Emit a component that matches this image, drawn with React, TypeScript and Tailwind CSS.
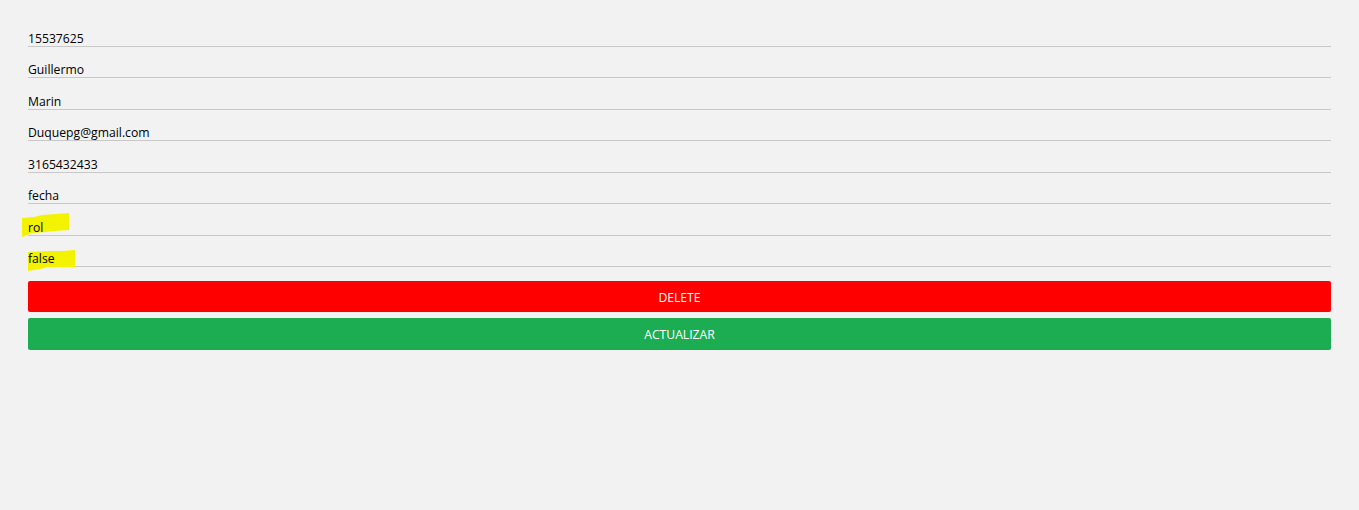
const fields = [
  "15537625",
  "Guillermo",
  "Marin",
  "Duquepg@gmail.com",
  "3165432433",
  "fecha",
  "rol",
  "false",
];

const Highlight = ({ kind }: { kind: "rol" | "false" }) =>
  kind === "rol" ? (
    <svg
      className="pointer-events-none absolute left-[-6px] top-[9px] h-[24px] w-[47px]"
      viewBox="0 0 47 24"
    >
      <polygon
        points="0,5 12,4 20,2 34,1 47,0 47,17 32,18 24,19 10,20 0,24"
        fill="#f3f300"
      />
    </svg>
  ) : (
    <svg
      className="pointer-events-none absolute left-0 top-[14.5px] h-[21px] w-[47px]"
      viewBox="0 0 47 21"
    >
      <polygon
        points="0,2 20,1 34,1 47,0 47,17 30,17 20,17 12,19 0,21"
        fill="#f3f300"
      />
    </svg>
  );

export default function App() {
  return (
    <div
      className="min-h-[510px] w-full bg-[#f2f2f2] px-[28px] pt-[15.6px] text-[12.2px] text-black"
      style={{ fontFamily: '"Open Sans", "Noto Sans", sans-serif' }}
    >
      <form className="flex flex-col">
        {fields.map((value) => (
          <div
            key={value}
            className="relative flex h-[31.43px] items-end border-b border-[#c8c8c8] pb-[1px]"
          >
            {(value === "rol" || value === "false") && (
              <Highlight kind={value} />
            )}
            <span className="relative leading-[12px]">{value}</span>
          </div>
        ))}
        <button
          type="button"
          className="mt-[14px] h-[31px] rounded-[2px] bg-[#ff0000] pt-[3px] text-[12.2px] text-white"
        >
          DELETE
        </button>
        <button
          type="button"
          className="mt-[6px] h-[32px] rounded-[2px] bg-[#1cad53] pt-[3px] text-[12.2px] text-white"
        >
          ACTUALIZAR
        </button>
      </form>
    </div>
  );
}
